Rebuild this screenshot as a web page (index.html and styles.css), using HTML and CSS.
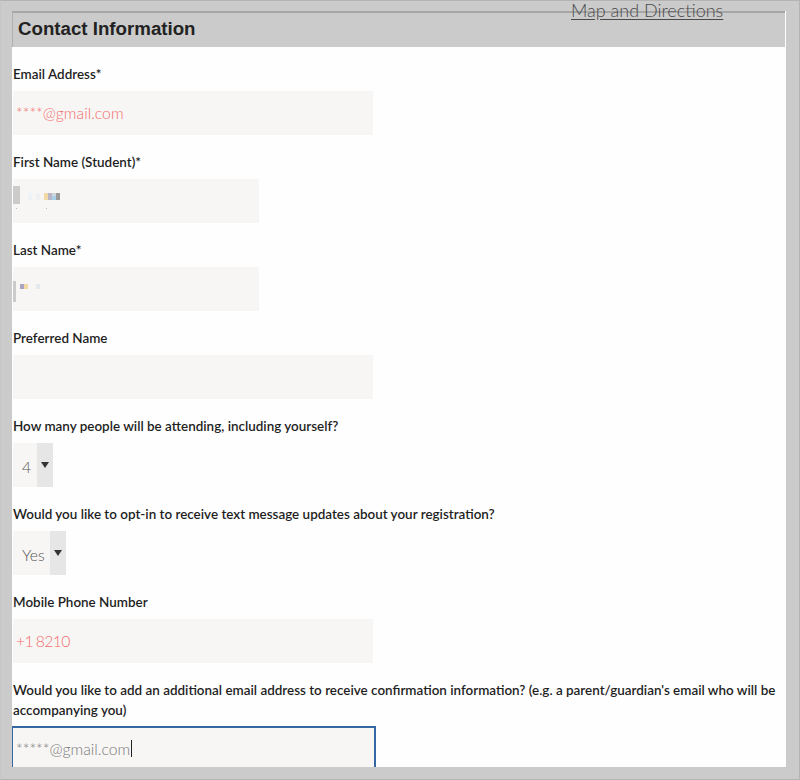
FILE: index.html
```html
<!DOCTYPE html>
<html lang="en">
<head>
    <meta charset="UTF-8">
    <meta name="viewport" content="width=device-width, initial-scale=1.0">
    <title>Contact Information</title>
    <link rel="stylesheet" href="styles.css">
</head>
<body>
    <div class="frame">
        <a class="map-link" href="#">Map and Directions</a>

        <div class="panel">
            <h2 class="panel-title">Contact Information</h2>

            <form class="panel-body">
                <div class="field">
                    <label for="email">Email Address*</label>
                    <input class="text-input error" id="email" type="text" value="****@gmail.com">
                </div>

                <div class="field">
                    <label>First Name (Student)*</label>
                    <div class="text-input short redacted">
                        <!-- blurred name -->
                        <svg width="60" height="44" viewBox="0 0 60 44">
                            <rect x="0" y="7" width="7" height="18" fill="#cbcbcb"/>
                            <rect x="15" y="14" width="4" height="7" fill="#eef3f7"/>
                            <rect x="23" y="14" width="4" height="7" fill="#eef2f5"/>
                            <rect x="31" y="14" width="4" height="7" fill="#f2d9a5"/>
                            <rect x="35" y="14" width="4" height="7" fill="#b9b6c6"/>
                            <rect x="39" y="14" width="4" height="3" fill="#cfd6dc"/>
                            <rect x="39" y="17" width="4" height="4" fill="#a8d0e8"/>
                            <rect x="43" y="14" width="4" height="7" fill="#9a9a9a"/>
                            <rect x="3" y="29" width="1" height="1" fill="#bbbbbb"/>
                            <rect x="33" y="29" width="1" height="1" fill="#bbbbbb"/>
                        </svg>
                    </div>
                </div>

                <div class="field">
                    <label>Last Name*</label>
                    <div class="text-input short redacted">
                        <svg width="60" height="44" viewBox="0 0 60 44">
                            <rect x="0" y="14" width="3" height="21" fill="#cbcbcb"/>
                            <rect x="7" y="17" width="4" height="5" fill="#aaa3c4"/>
                            <rect x="11" y="17" width="4" height="5" fill="#f2d9a5"/>
                            <rect x="23" y="17" width="4" height="5" fill="#e4e7ee"/>
                        </svg>
                    </div>
                </div>

                <div class="field">
                    <label for="preferred">Preferred Name</label>
                    <input class="text-input" id="preferred" type="text" value="">
                </div>

                <div class="field">
                    <label for="attending">How many people will be attending, including yourself?</label>
                    <div class="select">
                        <select id="attending" class="select-count">
                            <option>4</option>
                        </select>
                        <span class="caret"></span>
                    </div>
                </div>

                <div class="field">
                    <label for="optin">Would you like to opt-in to receive text message updates about your registration?</label>
                    <div class="select">
                        <select id="optin" class="select-yes">
                            <option>Yes</option>
                            <option>No</option>
                        </select>
                        <span class="caret"></span>
                    </div>
                </div>

                <div class="field">
                    <label for="phone">Mobile Phone Number</label>
                    <input class="text-input error phone" id="phone" type="text" value="+1 8210">
                </div>

                <div class="field">
                    <label>Would you like to add an additional email address to receive confirmation information? (e.g. a parent/guardian's email who will be accompanying you)</label>
                    <div class="text-input focused">*****@gmail.com<span class="cursor"></span></div>
                </div>
            </form>
        </div>
    </div>
</body>
</html>
```

FILE: styles.css
```css
* {
    box-sizing: border-box;
}

body {
    margin: 0;
    background-color: #cbcbcb;
    font-family: Lato, "Liberation Sans", Arial, sans-serif;
    color: #1f1f1f;
}

.frame {
    position: relative;
    width: 800px;
    height: 780px;
    padding: 10px 13px 0 11px;
    border: 1px solid #b4b4b4;
    border-left-color: #c6c6c6;
    overflow: hidden;
}

.map-link {
    position: absolute;
    top: -1px;
    left: 570px;
    font-size: 18px;
    font-weight: 300;
    line-height: 20px;
    color: #4a4a4a;
    text-decoration: underline;
    text-underline-offset: 2px;
}

.panel {
    height: 756px;
    background-color: #fefefe;
    overflow: hidden;
}

.panel-title {
    height: 36px;
    margin: 0 1px 0 0;
    padding-left: 5px;
    background-color: #cbcbcb;
    border-top: 2px solid #a6a6a6;
    border-left: 1px solid #b0b0b0;
    font-family: "Liberation Sans", Arial, sans-serif;
    font-size: 18.7px;
    font-weight: bold;
    line-height: 32px;
    color: #222;
}

.panel-body {
    display: flex;
    flex-direction: column;
    gap: 17px;
    padding: 17px 0 0 1px;
}

.field {
    display: flex;
    flex-direction: column;
    align-items: flex-start;
    gap: 7px;
}

.field label {
    font-size: 13.45px;
    font-weight: 600;
    line-height: 20px;
    color: #1f1f1f;
}

.text-input {
    width: 360px;
    height: 44px;
    padding: 0 3px 2px;
    border: none;
    background-color: #f7f6f4;
    font-family: Lato, sans-serif;
    font-size: 15.75px;
    font-weight: 300;
    color: #666;
    outline: none;
}

.text-input.short {
    width: 246px;
}

.text-input.error {
    color: #f26e6e;
}

.text-input.phone {
    letter-spacing: -0.6px;
    word-spacing: -1px;
}

.redacted {
    display: flex;
    padding: 0;
}

.focused {
    display: flex;
    align-items: center;
    width: 365px;
    height: 46px;
    margin: -1px 0 0 -2px;
    border: 2px solid #3567a3;
    color: #7a7a7a;
}

.cursor {
    width: 1px;
    height: 17px;
    margin-left: 1px;
    background-color: #222;
}

.select {
    display: flex;
    height: 44px;
}

.select select {
    appearance: none;
    -webkit-appearance: none;
    height: 44px;
    padding: 2px 0 0 9px;
    border: none;
    border-radius: 0;
    background-color: #f7f6f4;
    font-family: Lato, sans-serif;
    font-size: 15.75px;
    font-weight: 300;
    color: #555;
    outline: none;
}

.select-count {
    width: 24px;
}

.select-yes {
    width: 37px;
}

.caret {
    display: flex;
    align-items: center;
    justify-content: center;
    width: 16px;
    background-color: #e6e6e6;
}

.caret::after {
    content: "";
    border-left: 4px solid transparent;
    border-right: 4px solid transparent;
    border-top: 6px solid #333;
}
```
